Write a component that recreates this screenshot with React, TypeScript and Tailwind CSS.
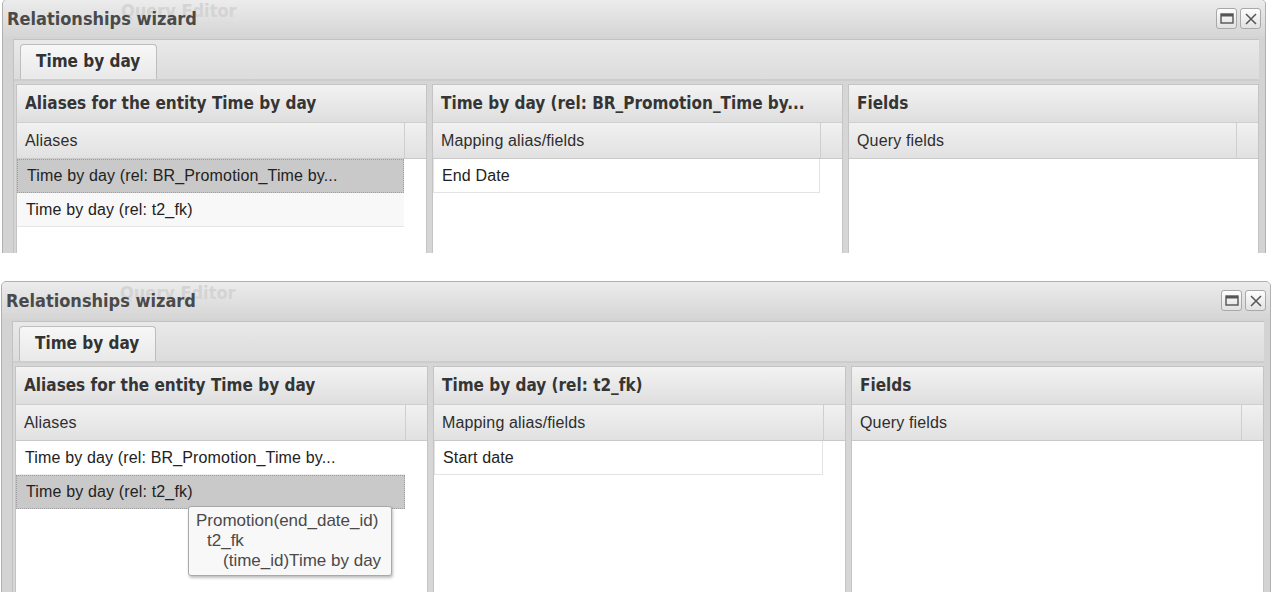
import React from "react";

type WizardProps = {
  relTitle: string;
  selected: number;
  mapping: string;
  tooltip?: boolean;
  width: string;
};

const aliases = ["Time by day (rel: BR_Promotion_Time by...", "Time by day (rel: t2_fk)"];

const bold = { fontFamily: '"DejaVu Sans Condensed", "DejaVu Sans", sans-serif' };
const plain = { fontFamily: '"Liberation Sans", Arial, sans-serif' };

function WinButton({ kind }: { kind: "max" | "close" }) {
  return (
    <div className="flex h-[21px] w-[21px] items-center justify-center rounded-[3px] border border-[#a8a8a8] bg-gradient-to-b from-[#fdfdfd] to-[#e2e2e2]">
      {kind === "max" ? (
        <svg width="14" height="11" viewBox="0 0 14 11">
          <rect x="1" y="1" width="12" height="9" fill="none" stroke="#555" strokeWidth="1.4" />
          <rect x="1" y="1" width="12" height="2.5" fill="#555" />
        </svg>
      ) : (
        <svg width="14" height="14" viewBox="0 0 14 14">
          <path d="M2 2 L12 12 M12 2 L2 12" stroke="#555" strokeWidth="1.5" />
        </svg>
      )}
    </div>
  );
}

function ColumnHeader({ label }: { label: string }) {
  return (
    <div className="flex h-[36px] border-b border-[#c9c9c9] bg-gradient-to-b from-[#f1f1f1] to-[#e1e1e1]">
      <div className="flex flex-1 items-center pl-[8px] text-[16px] tracking-[0.15px] text-[#2e2e2e]" style={plain}>
        {label}
      </div>
      <div className="w-[22px] border-l border-[#cfcfcf]" />
    </div>
  );
}

function PanelHeader({ title }: { title: string }) {
  return (
    <div
      className="flex h-[38px] items-center border-b border-[#cfcfcf] bg-gradient-to-b from-[#f3f3f3] to-[#dedede] pl-[8px] text-[17px] font-bold text-[#353535] font-stretch-condensed"
      style={bold}
    >
      {title}
    </div>
  );
}

function Wizard({ relTitle, selected, mapping, tooltip, width }: WizardProps) {
  return (
    <div className={`${width} flex h-full flex-col overflow-hidden rounded-t-[5px] border border-[#b0b0b0] bg-[#d3d3d3]`}>
      <div className="relative flex h-[37px] shrink-0 items-center justify-between bg-gradient-to-b from-[#ececec] to-[#d5d5d5] pl-[4px] pr-[4px]">
        <span
          className="absolute left-[118px] top-[1px] text-[18px] font-bold leading-[20px] text-[#d4d4d4] font-stretch-condensed"
          style={bold}
        >
          Query Editor
        </span>
        <span className="relative text-[18px] font-bold text-[#4a4a4a] font-stretch-condensed" style={bold}>
          Relationships wizard
        </span>
        <div className="flex gap-[3px]">
          <WinButton kind="max" />
          <WinButton kind="close" />
        </div>
      </div>

      <div className="flex flex-1 flex-col pl-[10px] pr-[6px] pt-[2px]">
        <div className="flex flex-1 flex-col border-l border-t border-[#c2c2c2] bg-[#d6d6d6]">
          <div className="flex h-[41px] items-end border-b-2 border-[#cdcdcd] bg-gradient-to-b from-[#e9e9e9] to-[#dcdcdc] pl-[6px]">
            <div
              className="flex h-[35px] w-[137px] items-center rounded-t-[4px] border border-b-0 border-[#bdbdbd] bg-gradient-to-b from-[#f7f7f7] to-[#e9e9e9] pl-[15px] text-[17px] font-bold text-[#333] font-stretch-condensed"
              style={bold}
            >
              Time by day
            </div>
          </div>

          <div className="grid flex-1 grid-cols-3 gap-[5px] pl-[2px] pt-[3px]">
            <div className="flex flex-col border-l border-r border-t border-[#c4c4c4] bg-white">
              <PanelHeader title="Aliases for the entity Time by day" />
              <ColumnHeader label="Aliases" />
              <div className="relative mr-[22px]">
                {aliases.map((a, i) => (
                  <div
                    key={a}
                    className={
                      i === selected
                        ? "flex h-[34px] items-center border border-dotted border-[#9d9d9d] bg-[#c9c9c9] pl-[9px] text-[16px] tracking-[0.15px] text-[#222]"
                        : i === 1
                          ? "flex h-[34px] items-center border-b border-[#e6e6e6] bg-[#f8f8f8] pl-[9px] text-[16px] tracking-[0.15px] text-[#222]"
                          : "flex h-[34px] items-center border-b border-[#ececec] bg-white pl-[9px] text-[16px] tracking-[0.15px] text-[#222]"
                    }
                    style={plain}
                  >
                    {a}
                  </div>
                ))}
                {tooltip ? (
                  <div
                    className="absolute left-[172px] top-[65px] w-[204px] rounded-[3px] border border-[#a9a9a9] bg-[#f8f8f8] py-[4px] pl-[7px] text-[17px] leading-[20px] text-[#4a4a4a] shadow-[1px_2px_3px_rgba(0,0,0,0.25)]"
                    style={plain}
                  >
                    <div>Promotion(end_date_id)</div>
                    <div className="pl-[11px]">t2_fk</div>
                    <div className="pl-[27px]">(time_id)Time by day</div>
                  </div>
                ) : null}
              </div>
            </div>

            <div className="flex flex-col border-l border-r border-t border-[#c4c4c4] bg-white">
              <PanelHeader title={relTitle} />
              <ColumnHeader label="Mapping alias/fields" />
              <div className="mr-[22px]">
                <div
                  className="flex h-[34px] items-center border border-t-0 border-[#e3e3e3] bg-white pl-[8px] text-[16px] tracking-[0.15px] text-[#222]"
                  style={plain}
                >
                  {mapping}
                </div>
              </div>
            </div>

            <div className="flex flex-col border-l border-r border-t border-[#c4c4c4] bg-white">
              <PanelHeader title="Fields" />
              <ColumnHeader label="Query fields" />
            </div>
          </div>
        </div>
      </div>
    </div>
  );
}

export default function App() {
  return (
    <div className="flex h-[592px] w-[1272px] flex-col overflow-hidden bg-white">
      <div className="ml-[2px] mt-[-1px] h-[254px] overflow-hidden">
        <div className="h-[280px]">
          <Wizard
            width="w-[1264px]"
            relTitle="Time by day (rel: BR_Promotion_Time by..."
            selected={0}
            mapping="End Date"
          />
        </div>
      </div>
      <div className="ml-[1px] mt-[28px] h-[311px] overflow-hidden">
        <div className="h-[340px]">
          <Wizard
            width="w-[1270px]"
            relTitle="Time by day (rel: t2_fk)"
            selected={1}
            mapping="Start date"
            tooltip
          />
        </div>
      </div>
    </div>
  );
}
